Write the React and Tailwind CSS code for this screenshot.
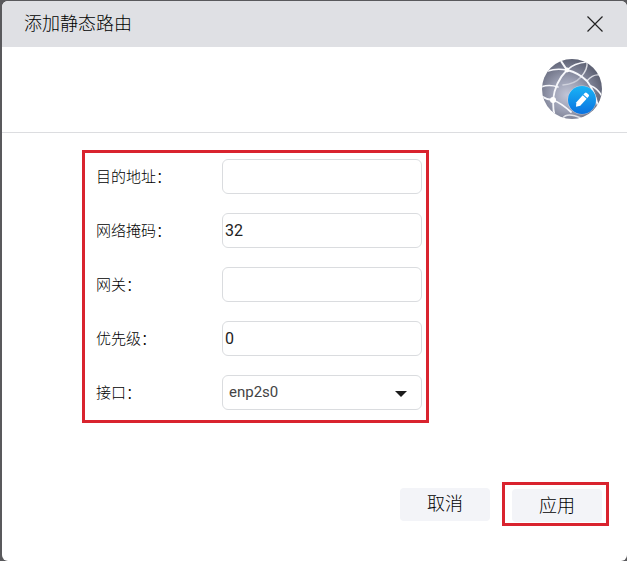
import { useState } from "react";

function GlobeEditIcon() {
  return (
    <svg className="size-[62px]" viewBox="0 0 62 62" aria-hidden="true">
      <defs>
        <radialGradient id="globe" cx="0.42" cy="0.6" r="0.6">
          <stop offset="0" stopColor="#c2c5d6" />
          <stop offset="0.45" stopColor="#9a9eb2" />
          <stop offset="0.8" stopColor="#74788b" />
          <stop offset="1" stopColor="#5f6375" />
        </radialGradient>
        <linearGradient id="badge" x1="0" y1="0" x2="0" y2="1">
          <stop offset="0" stopColor="#19b4f6" />
          <stop offset="1" stopColor="#0a72e0" />
        </linearGradient>
        <clipPath id="globeClip">
          <circle cx="31" cy="31" r="30" />
        </clipPath>
      </defs>
      <circle cx="31" cy="31" r="30" fill="url(#globe)" />
      <g clipPath="url(#globeClip)" fill="none" stroke="#f6f7fb" strokeLinecap="round">
        <path d="M7 13 Q15 10 26 12 Q33 5 46 4" strokeWidth="1.6" />
        <path d="M18 0 Q22 6 26 12 Q38 15 46 23 Q53 32 57 48" strokeWidth="2" />
        <path d="M26 12 Q14 24 12 42 Q12 52 14 60" strokeWidth="1.8" />
        <path d="M0 29 Q8 26 17 29" strokeWidth="1.6" />
        <path d="M22 27 Q34 26 40 19" strokeWidth="1.6" opacity="0.5" />
        <path d="M0 38 Q6 42 12 42 Q20 45 30 54" strokeWidth="1.8" />
        <path d="M40 19 Q47 11 46 4" strokeWidth="1.4" opacity="0.8" />
        <path d="M46 23 Q52 16 58 17" strokeWidth="1.4" opacity="0.8" />
        <path d="M50 28 Q56 30 61 38" strokeWidth="1.6" />
        <path d="M22 60 Q26 54 40 60" strokeWidth="1.4" opacity="0.8" />
      </g>
      <circle cx="26" cy="12" r="2.4" fill="#fff" />
      <circle cx="12" cy="42" r="3" fill="#fff" />
      <circle cx="41" cy="42" r="14.500" fill="#dfe8f5" opacity="0.6" />
      <circle cx="41" cy="42" r="14" fill="url(#badge)" />
      <g transform="translate(41 42) rotate(-48)" fill="#fff">
        <path d="M-9 0 L-5.500 -2.600 H4 V2.600 H-5.500 Z" />
        <path d="M5 -2.600 H7 Q8.500 -2.600 8.500 -1.200 V1.200 Q8.500 2.600 7 2.600 H5 Z" />
      </g>
    </svg>
  );
}

function Field({ id, label, children }) {
  return (
    <div className="flex items-center">
      <label htmlFor={id} className="w-[126px] shrink-0 text-[15px] leading-5 font-light text-black">
        {label}
      </label>
      {children}
    </div>
  );
}

const inputClass =
  "h-[35px] w-[200px] rounded-md border border-[#dadcdf] bg-white px-0.5 text-base text-[#222] outline-none focus:border-[#8ab4e8]";

export default function App() {
  const [form, setForm] = useState({
    dest: "",
    mask: "32",
    gateway: "",
    priority: "0",
    iface: "enp2s0",
  });

  const update = (key) => (e) => setForm({ ...form, [key]: e.target.value });

  return (
    <div className="min-h-screen bg-[#59595c] pt-px pl-0.5 flex font-['Roboto','Noto_Sans_CJK_SC',sans-serif]">
      <div
        role="dialog"
        aria-labelledby="dialog-title"
        className="flex flex-1 flex-col overflow-hidden rounded-md bg-white"
      >
        <header className="flex h-[46px] items-center justify-between bg-[#dfe0e4] pr-6 pl-[22px]">
          <h1 id="dialog-title" className="text-lg leading-6 font-light text-black">
            添加静态路由
          </h1>
          <button type="button" aria-label="关闭">
            <svg className="size-4" viewBox="0 0 16 16" fill="none" stroke="#222" strokeWidth="1.2">
              <path d="M0.500 0.500 L15.500 15.500 M15.500 0.500 L0.500 15.500" />
            </svg>
          </button>
        </header>

        <div className="flex h-[86px] items-start justify-end border-b border-[#dcdde0] pt-[11px] pr-6">
          <GlobeEditIcon />
        </div>

        <form className="flex flex-1 flex-col" onSubmit={(e) => e.preventDefault()}>
          <div className="mt-[17px] ml-20 flex flex-col gap-[19px] self-start border-3 border-[#d9232e] pt-1.5 pr-1 pb-2.5 pl-[11px]">
            <Field id="dest" label="目的地址：">
              <input id="dest" className={inputClass} value={form.dest} onChange={update("dest")} />
            </Field>
            <Field id="mask" label="网络掩码：">
              <input id="mask" className={inputClass} value={form.mask} onChange={update("mask")} />
            </Field>
            <Field id="gateway" label="网关：">
              <input id="gateway" className={inputClass} value={form.gateway} onChange={update("gateway")} />
            </Field>
            <Field id="priority" label="优先级：">
              <input id="priority" className={inputClass} value={form.priority} onChange={update("priority")} />
            </Field>
            <Field id="iface" label="接口：">
              <div className="relative">
                <select
                  id="iface"
                  className="block h-[35px] w-[200px] appearance-none rounded-md border border-[#dadcdf] bg-white px-1.5 text-[15px] text-[#444] outline-none"
                  value={form.iface}
                  onChange={update("iface")}
                >
                  <option value="enp2s0">enp2s0</option>
                </select>
                <svg
                  className="pointer-events-none absolute top-4 right-[15px] h-1.5 w-3"
                  viewBox="0 0 12 6"
                  fill="#1c1c1c"
                >
                  <path d="M0 0 H12 L6 6 Z" />
                </svg>
              </div>
            </Field>
          </div>

          <div className="mt-auto flex items-center justify-end gap-3 pr-[18px] pb-[35px]">
            <button type="button" className="h-[33px] w-[90px] rounded bg-[#f3f4f8] text-lg font-light text-black">
              取消
            </button>
            <div className="flex border-3 border-[#d9232e] pt-1 pr-1 pb-px pl-[7px]">
              <button type="submit" className="h-[33px] w-[90px] rounded bg-[#f3f4f8] text-lg font-light text-black">
                应用
              </button>
            </div>
          </div>
        </form>
      </div>
    </div>
  );
}
